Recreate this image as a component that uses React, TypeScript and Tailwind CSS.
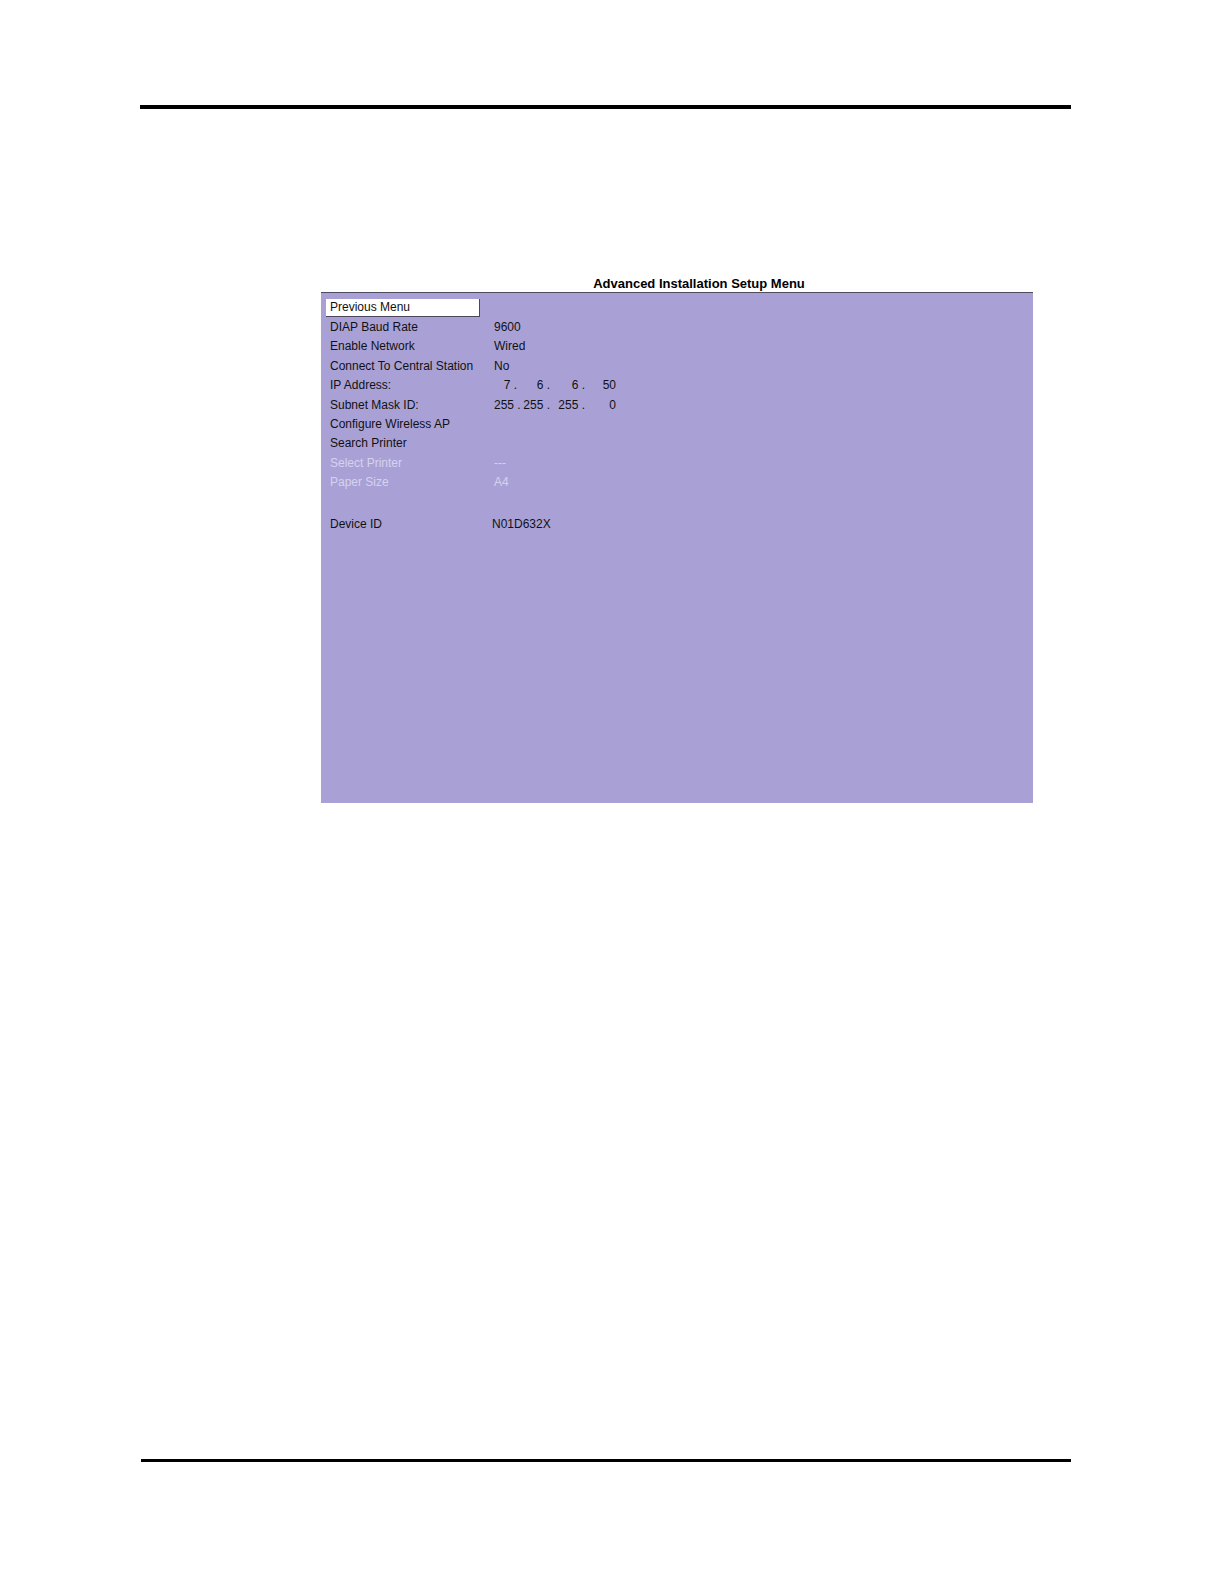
const ipParts = ["7 .", "6 .", "6 .", "50"];
const maskParts = ["255 .", "255 .", "255 .", "0"];
const partWidths = ["w-[23px]", "w-[33px]", "w-[35px]", "w-[31px]"];

function Octets({ parts }: { parts: string[] }) {
  return (
    <span className="flex">
      {parts.map((p, i) => (
        <span key={i} className={`${partWidths[i]} text-right whitespace-pre`}>
          {p}
        </span>
      ))}
    </span>
  );
}

const rows: { label: string; value?: React.ReactNode; disabled?: boolean }[] = [
  { label: "DIAP Baud Rate", value: "9600" },
  { label: "Enable Network", value: "Wired" },
  { label: "Connect To Central Station", value: "No" },
  { label: "IP Address:", value: <Octets parts={ipParts} /> },
  { label: "Subnet Mask ID:", value: <Octets parts={maskParts} /> },
  { label: "Configure Wireless AP" },
  { label: "Search Printer" },
  { label: "Select Printer", value: "---", disabled: true },
  { label: "Paper Size", value: "A4", disabled: true },
];

function Row({ label, value, disabled }: { label: string; value?: React.ReactNode; disabled?: boolean }) {
  return (
    <div
      className={`flex h-[19.4px] items-center ${disabled ? "text-[#d6d2ee]" : "text-[#111]"}`}
    >
      <span className="w-[173px] pl-[9px]">{label}</span>
      <span className="flex-1">{value}</span>
    </div>
  );
}

export default function App() {
  return (
    <div className="h-[1584px] w-[1224px] bg-white font-['Liberation_Sans',Arial,sans-serif]">
      <div className="ml-[140px] pt-[105px]">
        <div className="h-[4px] w-[931px] bg-black" />
      </div>

      <div className="ml-[321px] mt-[167px] w-[712px]">
        <h1 className="pl-[44px] text-center text-[13px] font-bold leading-[16px] text-black">
          Advanced Installation Setup Menu
        </h1>
        <div className="h-[511px] border-t border-[#4d4b5e] bg-[#a9a1d6] pt-[5px] text-[12px]">
          <div className="flex h-[19.4px] items-center">
            <div className="ml-[5px] flex h-[18px] w-[154px] items-center border-b border-r border-[#4a4858] bg-white pl-[4px] text-[#111]">
              Previous Menu
            </div>
          </div>
          {rows.map((r) => (
            <Row key={r.label} {...r} />
          ))}
          <div className="h-[22.4px]" />
          <div className="flex h-[19.4px] items-center text-[#111]">
            <span className="w-[171px] pl-[9px]">Device ID</span>
            <span>N01D632X</span>
          </div>
        </div>
      </div>

      <div className="ml-[141px] mt-[656px] h-[3px] w-[930px] bg-black" />
    </div>
  );
}
